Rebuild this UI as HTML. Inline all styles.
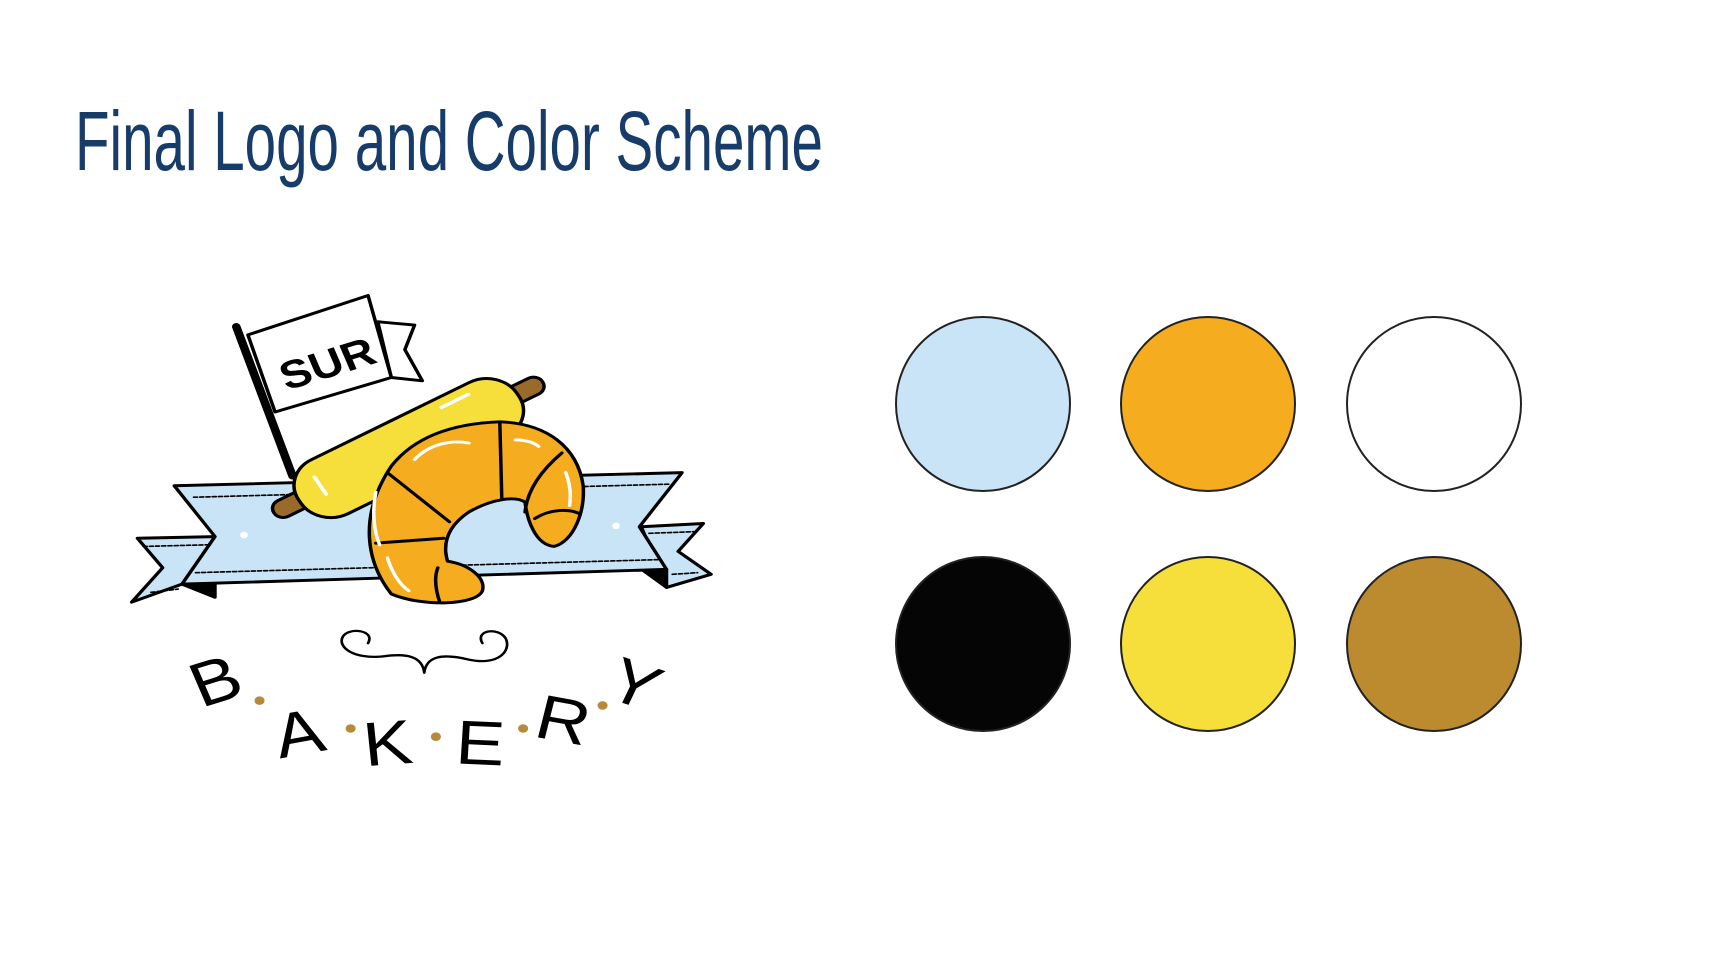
<!DOCTYPE html>
<html><head><meta charset="utf-8"><style>
html,body{margin:0;padding:0;background:#fff;}
body{width:1728px;height:968px;position:relative;overflow:hidden;}
.t{position:absolute;left:75px;top:99px;font-family:"Liberation Sans",sans-serif;font-size:84px;color:#173c69;white-space:nowrap;transform-origin:0 0;transform:scaleX(0.673);line-height:1;}
.c{position:absolute;width:176px;height:176px;border-radius:50%;border:2px solid #222;box-sizing:border-box;}
</style></head><body>
<div class="t">Final Logo and Color Scheme</div>
<div class="c" style="left:895px;top:316px;background:#c9e4f6"></div>
<div class="c" style="left:1120px;top:316px;background:#f5ac1f"></div>
<div class="c" style="left:1346px;top:316px;background:#fff"></div>
<div class="c" style="left:895px;top:556px;background:#050505"></div>
<div class="c" style="left:1120px;top:556px;background:#f6df3a"></div>
<div class="c" style="left:1346px;top:556px;background:#bc8a2f"></div>
<svg width="1728" height="968" style="position:absolute;left:0;top:0">
<g transform="translate(120,282.4) scale(0.3876,0.328)" stroke="#000" stroke-width="9" stroke-linejoin="round" stroke-linecap="round">
 <path d="M45,780 L245,775 L160,920 L30,975 L110,870 Z" fill="#c9e4f6"/>
 <path d="M1345,745 L1505,735 L1440,820 L1525,890 L1410,930 Z" fill="#c9e4f6"/>
 <path d="M160,920 L245,880 L245,960 Z M1410,930 L1340,870 L1410,875 Z" fill="#000"/>
 <path d="M140,620 L1450,580 L1340,745 L1410,875 L160,920 L245,775 Z" fill="#c9e4f6"/>
 <path d="M190,655 L1420,615 M195,885 L1395,845 M60,805 L225,800 M1365,765 L1480,760 M80,945 L150,935 M1425,890 L1490,885" stroke-width="5" stroke-dasharray="10 6" fill="none"/>
 <circle cx="320" cy="770" r="10" fill="#fff" stroke="none"/>
 <circle cx="1280" cy="742" r="10" fill="#fff" stroke="none"/>
 <path d="M665,120 L760,130 L735,205 L780,300 L700,290 Z" fill="#fff"/>
 <path d="M330,160 L640,40 L700,290 L400,395 Z" fill="#fff"/>
 <path d="M300,135 L445,590" stroke-width="22"/>
 <text x="400" y="300" transform="rotate(-20 500 230)" font-family="Liberation Sans, sans-serif" font-weight="bold" font-size="120" stroke="none" fill="#000">SUR</text>
 <g transform="rotate(-30 745 505)">
  <rect x="345" y="475" width="800" height="55" rx="27" fill="#9a6a2a"/>
  <rect x="420" y="410" width="650" height="190" rx="90" fill="#f6df3a"/>
  <path d="M490,460 L490,520 M880,440 L960,440" stroke="#fff" stroke-width="10" fill="none"/>
 </g>
 <path d="M700,950 C640,860 610,720 700,560 C760,470 860,430 980,425 C1100,430 1180,500 1195,620 C1200,700 1170,790 1120,805 C1070,800 1050,720 1045,670 C1020,650 960,660 900,700 C850,740 830,790 845,850 C900,860 945,900 935,940 C920,985 780,990 700,950 Z" fill="#f5ac1f"/>
 <path d="M690,580 L850,730 M980,430 L985,660 M1140,520 C1080,580 1050,640 1045,700 M660,795 L835,780 M820,870 C810,900 815,940 825,975 M1070,720 C1110,690 1160,690 1185,705" fill="none"/>
 <path d="M760,540 C800,490 860,480 900,490 M1020,480 C1050,480 1070,490 1080,500 M660,640 C650,700 655,760 670,800 M690,840 C700,880 720,920 745,940 M1150,580 C1160,610 1165,640 1160,680" stroke="#fff" stroke-width="9" fill="none"/>
 <path d="M785,1190 C780,1140 740,1130 680,1140 C600,1150 560,1110 575,1080 C590,1050 660,1060 640,1100 M785,1190 C790,1140 830,1130 900,1150 C980,1170 1010,1120 995,1085 C975,1050 915,1060 935,1100" fill="none" stroke-width="7"/>
 <g fill="#b58a3a" stroke="none">
  <circle cx="360" cy="1275" r="13"/><circle cx="595" cy="1360" r="13"/><circle cx="815" cy="1385" r="13"/><circle cx="1040" cy="1360" r="13"/><circle cx="1245" cy="1290" r="13"/>
 </g>
 <g font-family="Liberation Sans, sans-serif" font-size="190" stroke="none" fill="#000" text-anchor="middle">
  <text x="245" y="1280" transform="rotate(-20 245 1210)">B</text>
  <text x="460" y="1440" transform="rotate(-12 460 1370)">A</text>
  <text x="690" y="1470" transform="rotate(-5 690 1400)">K</text>
  <text x="930" y="1470" transform="rotate(3 930 1400)">E</text>
  <text x="1145" y="1400" transform="rotate(12 1145 1330)">R</text>
  <text x="1330" y="1290" transform="rotate(22 1330 1220)">Y</text>
 </g>
</g>
</svg>
</body></html>
